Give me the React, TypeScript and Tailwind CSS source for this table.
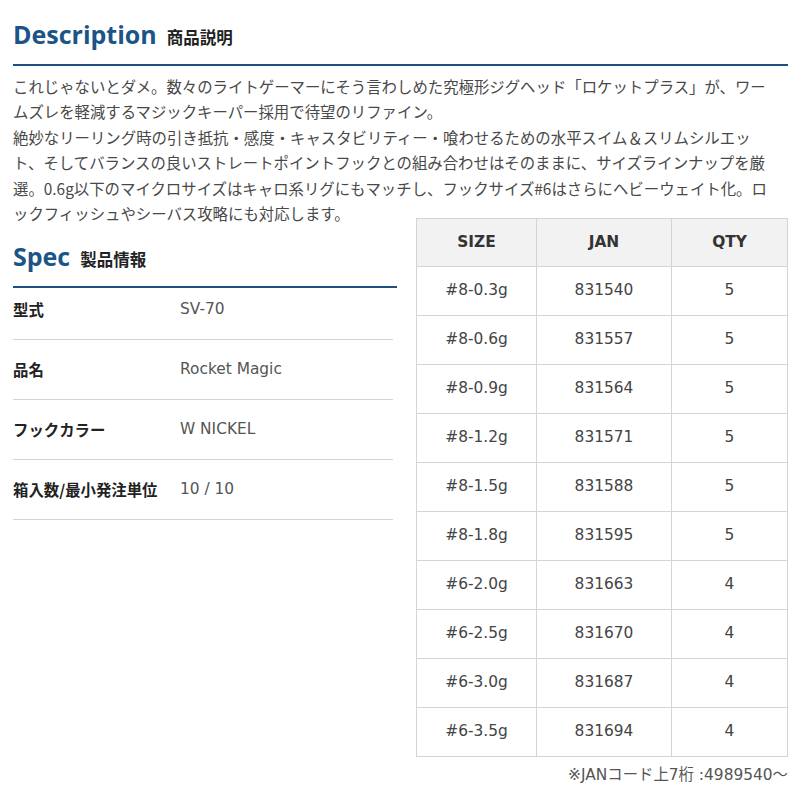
const body = "font-['DejaVu_Sans','Noto_Sans_CJK_JP',sans-serif]";

const specRows = [
  { label: "型式", value: "SV-70" },
  { label: "品名", value: "Rocket Magic" },
  { label: "フックカラー", value: "W NICKEL" },
  { label: "箱入数/最小発注単位", value: "10 / 10" },
];

const sizes = [
  ["#8-0.3g", "831540", "5"],
  ["#8-0.6g", "831557", "5"],
  ["#8-0.9g", "831564", "5"],
  ["#8-1.2g", "831571", "5"],
  ["#8-1.5g", "831588", "5"],
  ["#8-1.8g", "831595", "5"],
  ["#6-2.0g", "831663", "4"],
  ["#6-2.5g", "831670", "4"],
  ["#6-3.0g", "831687", "4"],
  ["#6-3.5g", "831694", "4"],
];

function Heading({ en, ja }: { en: string; ja: string }) {
  return (
    <div className="flex items-baseline gap-[10px]">
      <span className="font-['Open_Sans',sans-serif] text-[25px] font-bold leading-none text-[#1b5486]">{en}</span>
      <span className="font-['Noto_Sans_CJK_JP',sans-serif] text-[16.5px] font-bold text-[#222]">{ja}</span>
    </div>
  );
}

export default function App() {
  return (
    <div className={`min-h-[800px] w-[800px] bg-white ${body} text-[15.4px] text-[#444]`}>
      <div className="w-[788px] pl-[13px] pt-[22px]">
        <div className="border-b-2 border-[#1d4f7f] pb-[14px]">
          <Heading en="Description" ja="商品説明" />
        </div>

        <p className="mt-[8px] whitespace-nowrap leading-[25.5px] font-['Noto_Sans_CJK_JP',sans-serif] text-[#484848]">
          これじゃないとダメ。数々のライトゲーマーにそう言わしめた究極形ジグヘッド「ロケットプラス」が、ワー
          <br />
          ムズレを軽減するマジックキーパー採用で待望のリファイン。
          <br />
          絶妙なリーリング時の引き抵抗・感度・キャスタビリティー・喰わせるための水平スイム＆スリムシルエッ
          <br />
          ト、そしてバランスの良いストレートポイントフックとの組み合わせはそのままに、サイズラインナップを厳
          <br />
          選。0.6g以下のマイクロサイズはキャロ系リグにもマッチし、フックサイズ#6はさらにヘビーウェイト化。ロ
          <br />
          ックフィッシュやシーバス攻略にも対応します。
        </p>

        <div className="flex items-start justify-between">
          <div className="w-[384px] pt-[17px]">
            <div className="border-b-2 border-[#1d4f7f] pb-[14px]">
              <Heading en="Spec" ja="製品情報" />
            </div>
            {specRows.map((r, i) => (
              <div
                key={r.label}
                className={`flex w-[380px] items-center border-b border-[#d4d4d4] leading-[19px] ${
                  i === 0 ? "pt-[12px] pb-[20px]" : "py-[20px]"
                }`}
              >
                <span className="w-[167px] font-['Noto_Sans_CJK_JP',sans-serif] font-bold text-[#222]">{r.label}</span>
                <span className="text-[#555]">{r.value}</span>
              </div>
            ))}
          </div>

          <div className="-mt-[9px] w-[372px]">
            <table className="w-full border-collapse text-center text-[#444]">
              <thead>
                <tr className="h-[48px] bg-[#f2f2f2] text-[#333]">
                  <th className="w-[120px] border border-[#d4d4d4] font-bold">SIZE</th>
                  <th className="w-[135px] border border-[#d4d4d4] font-bold">JAN</th>
                  <th className="border border-[#d4d4d4] font-bold">QTY</th>
                </tr>
              </thead>
              <tbody>
                {sizes.map((s) => (
                  <tr key={s[1]} className="h-[49px]">
                    <td className="border border-[#d4d4d4]">{s[0]}</td>
                    <td className="border border-[#d4d4d4]">{s[1]}</td>
                    <td className="border border-[#d4d4d4]">{s[2]}</td>
                  </tr>
                ))}
              </tbody>
            </table>
            <div className="mt-[7px] text-right text-[#555]">※JANコード上7桁 :4989540～</div>
          </div>
        </div>
      </div>
    </div>
  );
}
